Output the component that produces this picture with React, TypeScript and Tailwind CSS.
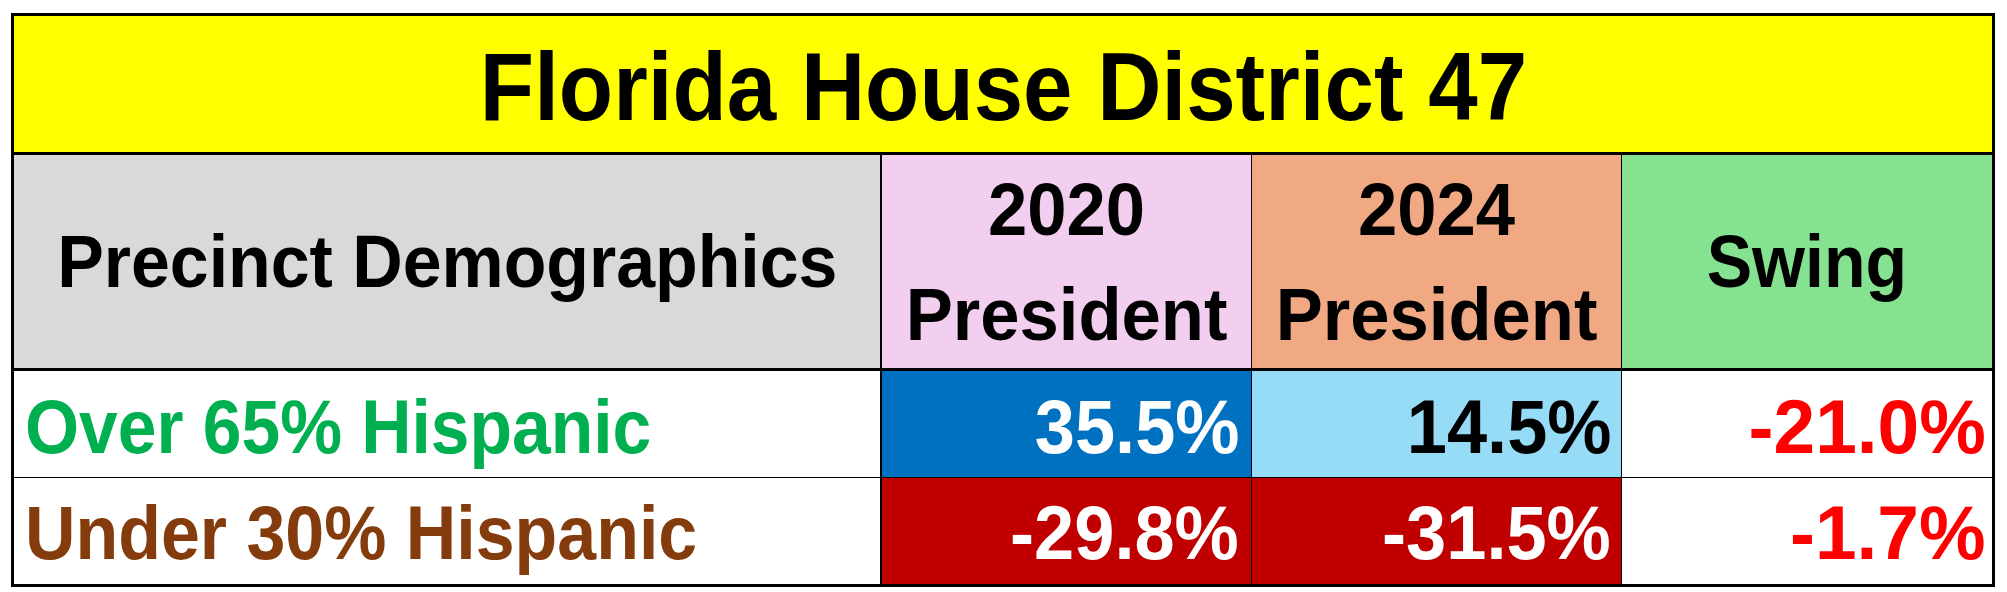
const font = { fontFamily: '"Liberation Sans", Arial, sans-serif' };

export default function App() {
  return (
    <div className="w-[2007px] h-[592px] bg-white pt-[13px] pl-[11px]" style={font}>
      <div className="w-[1984px] h-[574px] border-[3px] border-black flex flex-col font-bold">
        {/* Title */}
        <div className="h-[139px] bg-[#FFFF00] border-b-[3px] border-black flex items-center justify-center pt-[6px]">
          <span className="inline-block text-[96px] leading-none text-black scale-x-[0.926]">Florida House District 47</span>
        </div>

        {/* Header */}
        <div className="h-[216px] border-b-[3px] border-black grid grid-cols-[868px_370px_370px_1fr]">
          <div className="bg-[#D9D9D9] border-r-2 border-black flex items-center justify-center">
            <span className="inline-block text-[74px] leading-none scale-x-[0.944]">Precinct Demographics</span>
          </div>
          <div className="bg-[#F2CEEF] border-r border-black flex items-center justify-center text-center">
            <span className="inline-block text-[74px] leading-[105px] scale-x-[0.954]">2020<br />President</span>
          </div>
          <div className="bg-[#F1A983] border-r border-black flex items-center justify-center text-center">
            <span className="inline-block text-[74px] leading-[105px] scale-x-[0.954]">2024<br />President</span>
          </div>
          <div className="bg-[#84E291] flex items-center justify-center">
            <span className="inline-block text-[74px] leading-none scale-x-[0.92]">Swing</span>
          </div>
        </div>

        {/* Row 1 */}
        <div className="h-[107px] border-b border-black grid grid-cols-[868px_370px_370px_1fr] text-[76px] leading-none">
          <div className="border-r-2 border-black flex items-center pl-[11px] pt-[6px] text-[#00B050]">
            <span className="inline-block origin-left scale-x-[0.915]">Over 65% Hispanic</span>
          </div>
          <div className="bg-[#0070C0] border-r border-black flex items-center justify-end pr-[12px] pt-[6px] text-white">
            <span className="inline-block origin-right scale-x-[0.95]">35.5%</span>
          </div>
          <div className="bg-[#97DCF7] border-r border-black flex items-center justify-end pr-[10px] pt-[6px] text-black">
            <span className="inline-block origin-right scale-x-[0.95]">14.5%</span>
          </div>
          <div className="flex items-center justify-end pr-[6px] pt-[6px] text-[#FF0000]">
            <span className="inline-block origin-right scale-x-[0.985]">-21.0%</span>
          </div>
        </div>

        {/* Row 2 */}
        <div className="flex-1 grid grid-cols-[868px_370px_370px_1fr] text-[76px] leading-none">
          <div className="border-r-2 border-black flex items-center pl-[11px] pt-[4px] text-[#843C0C]">
            <span className="inline-block origin-left scale-x-[0.92]">Under 30% Hispanic</span>
          </div>
          <div className="bg-[#C00000] border-r border-black flex items-center justify-end pr-[12px] pt-[4px] text-white">
            <span className="inline-block origin-right scale-x-[0.95]">-29.8%</span>
          </div>
          <div className="bg-[#C00000] border-r border-black flex items-center justify-end pr-[10px] pt-[4px] text-white">
            <span className="inline-block origin-right scale-x-[0.95]">-31.5%</span>
          </div>
          <div className="flex items-center justify-end pr-[6px] pt-[4px] text-[#FF0000]">
            <span className="inline-block origin-right scale-x-[0.985]">-1.7%</span>
          </div>
        </div>
      </div>
    </div>
  );
}
